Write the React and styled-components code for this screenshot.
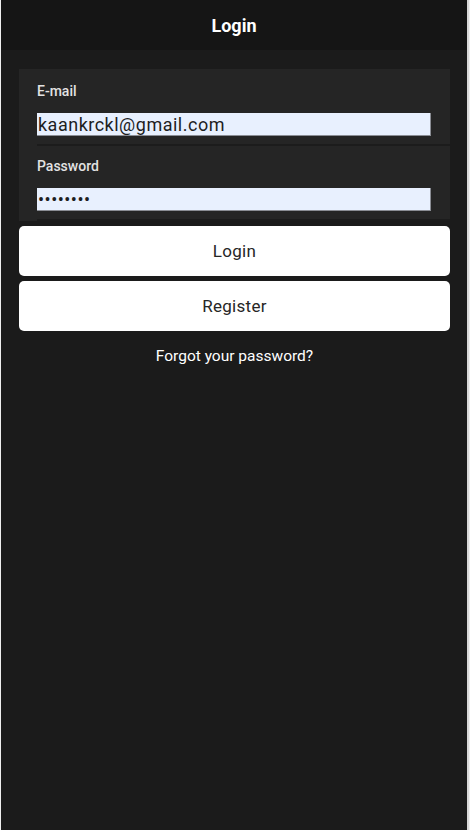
import React from 'react';
import styled, { createGlobalStyle } from 'styled-components';

const GlobalStyle = createGlobalStyle`
  html, body {
    margin: 0;
    padding: 0;
    background-color: #efefef;
    font-family: Roboto, "Liberation Sans", sans-serif;
  }
`;

const Screen = styled.div`
  margin-left: 1px;
  width: 466px;
  height: 830px;
  background-color: #1b1b1b;
  display: flex;
  flex-direction: column;
  border-right: 2px solid #d8d8d8;
`;

const Header = styled.header`
  height: 50px;
  background-color: #151515;
  display: flex;
  align-items: center;
  justify-content: center;
  color: #fff;
  font-size: 18px;
  font-weight: 700;
`;

const Content = styled.main`
  padding: 19px 17px 0 18px;
  display: flex;
  flex-direction: column;
`;

const Card = styled.div`
  background-color: #252525;
  display: flex;
  flex-direction: column;
  padding-left: 18px;
`;

const Field = styled.div`
  display: flex;
  flex-direction: column;
  padding-top: ${(p) => p.$top}px;
  padding-bottom: 8px;
  border-bottom: 2px solid #1c1c1c;
`;

const Label = styled.label`
  color: #e2e2e2;
  font-size: 14px;
  font-weight: 500;
  line-height: 16px;
  margin-bottom: 14px;
`;

const Input = styled.input`
  width: 394px;
  height: 23px;
  box-sizing: border-box;
  margin: 0;
  padding: 0 1px;
  border: none;
  border-right: 1px solid #8a8d94;
  border-bottom: 1px solid #8a8d94;
  background-color: #e8f0fe;
  color: #1e1e1e;
  font-family: Roboto, "Liberation Sans", sans-serif;
  font-size: 18px;
  font-weight: 400;
  letter-spacing: 0.5px;
  outline: none;
`;

const Button = styled.button`
  margin-top: ${(p) => p.$gap}px;
  height: 50px;
  border: none;
  border-radius: 5px;
  background-color: #fff;
  color: #262626;
  font-family: Roboto, "Liberation Sans", sans-serif;
  font-size: 17px;
  font-weight: 400;
  letter-spacing: 0.3px;
  cursor: pointer;
`;

const Forgot = styled.a`
  margin-top: 15px;
  text-align: center;
  color: #fff;
  font-size: 15.5px;
  line-height: 20px;
  cursor: pointer;
`;

export default function App() {
  return (
    <>
      <GlobalStyle />
      <Screen>
        <Header>Login</Header>
        <Content>
          <Card>
            <Field $top={14}>
              <Label>E-mail</Label>
              <Input type="email" defaultValue="kaankrckl@gmail.com" />
            </Field>
            <Field $top={12}>
              <Label>Password</Label>
              <Input type="password" defaultValue="password" />
            </Field>
          </Card>
          <Button $gap={5}>Login</Button>
          <Button $gap={5}>Register</Button>
          <Forgot>Forgot your password?</Forgot>
        </Content>
      </Screen>
    </>
  );
}
